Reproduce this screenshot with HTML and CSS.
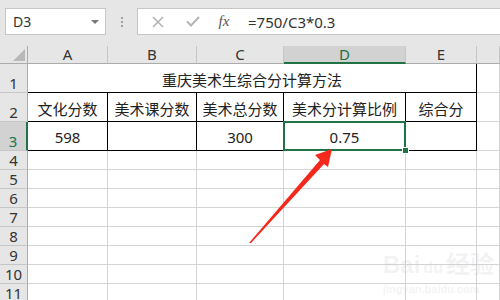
FILE: index.html
```html
<!DOCTYPE html>
<html lang="zh-CN">
<head>
    <meta charset="UTF-8">
    <title>重庆美术生综合分计算方法</title>
    <link rel="stylesheet" href="styles.css">
</head>
<body>
    <!-- 编辑栏 -->
    <div class="toolbar">
        <div class="namebox">
            <span>D3</span>
            <span class="caret"></span>
        </div>
        <div class="grip"><i></i><i></i><i></i></div>
        <div class="formula">
            <span class="fbtn">
                <svg width="12" height="12" viewBox="0 0 12 12"><path d="M1 1L11 11M11 1L1 11" stroke="#b4b4b4" stroke-width="1.6" fill="none"/></svg>
            </span>
            <span class="fbtn">
                <svg width="14" height="11" viewBox="0 0 14 11"><path d="M1 5.5L5 9.5L13 1" stroke="#b4b4b4" stroke-width="2" fill="none"/></svg>
            </span>
            <span class="fx">fx</span>
            <span class="ftext">=750/C3*0.3</span>
        </div>
    </div>

    <!-- 表格 -->
    <div class="sheet">
        <div class="corner"></div>
        <div class="colhead">A</div>
        <div class="colhead">B</div>
        <div class="colhead">C</div>
        <div class="colhead active">D</div>
        <div class="colhead">E</div>
        <div class="colhead"></div>

        <div class="rowhead">1</div>
        <div class="cell title">重庆美术生综合分计算方法</div>
        <div class="cell"></div>

        <div class="rowhead">2</div>
        <div class="cell boxed">文化分数</div>
        <div class="cell boxed">美术课分数</div>
        <div class="cell boxed">美术总分数</div>
        <div class="cell boxed">美术分计算比例</div>
        <div class="cell boxed">综合分</div>
        <div class="cell"></div>

        <div class="rowhead active">3</div>
        <div class="cell boxed">598</div>
        <div class="cell boxed"></div>
        <div class="cell boxed">300</div>
        <div class="cell boxed selected">0.75</div>
        <div class="cell boxed"></div>
        <div class="cell"></div>
    </div>

    <div class="watermark">
        <div class="wm-logo">Bai<span class="paw">du</span>经验</div>
        <div class="wm-url">jingyan.baidu.com</div>
    </div>

    <svg class="arrow" width="500" height="300" viewBox="0 0 500 300">
        <polygon points="332,149 315,155 320,160 249,243 251,243 324,164 328,167" fill="#f5281c"/>
    </svg>

    <script>
        // 空行 4-11
        const sheet = document.querySelector('.sheet');
        for (let r = 4; r <= 11; r++) {
            let html = '<div class="rowhead">' + r + '</div>';
            for (let c = 0; c < 6; c++) {
                html += '<div class="cell"></div>';
            }
            sheet.insertAdjacentHTML('beforeend', html);
        }
    </script>
</body>
</html>
```

FILE: styles.css
```css
body {
    margin: 0;
    width: 500px;
    height: 300px;
    overflow: hidden;
    position: relative;
    background-color: #fff;
    font-family: "Noto Sans", "Noto Sans CJK SC", sans-serif;
    color: #222;
}

/* 编辑栏 */
.toolbar {
    height: 46px;
    background-color: #e6e6e6;
    display: flex;
    align-items: flex-start;
    padding-top: 8px;
    box-sizing: border-box;
}

.namebox {
    margin-left: 5px;
    width: 101px;
    height: 27px;
    box-sizing: border-box;
    background-color: #fff;
    border: 1px solid #c6c6c6;
    display: flex;
    align-items: center;
    justify-content: space-between;
    padding: 0 6px 0 7px;
    font-size: 14px;
    color: #333;
}

.caret {
    width: 0;
    height: 0;
    border-left: 4px solid transparent;
    border-right: 4px solid transparent;
    border-top: 4px solid #777;
}

.grip {
    width: 31px;
    height: 27px;
    display: flex;
    flex-direction: column;
    align-items: center;
    justify-content: center;
    gap: 2px;
}

.grip i {
    width: 2px;
    height: 2px;
    background-color: #a0a0a0;
}

.formula {
    flex: 1;
    height: 27px;
    box-sizing: border-box;
    background-color: #fff;
    border: 1px solid #c6c6c6;
    border-right: none;
    display: flex;
    align-items: center;
}

.fbtn {
    width: 35px;
    display: flex;
    justify-content: center;
}

.fbtn:first-child {
    margin-left: 2px;
}

.fx {
    width: 24px;
    text-align: center;
    font-family: "Liberation Serif", serif;
    font-style: italic;
    font-size: 15px;
    color: #555;
    margin-left: 2px;
}

.ftext {
    margin-left: 12px;
    font-size: 15px;
    color: #333;
}

/* 表格 */
.sheet {
    display: grid;
    grid-template-columns: 28px 80px 89px 87px 122px 71px 1fr;
    grid-template-rows: 18px 29px 29px 29px repeat(8, 19px);
}

.sheet > div {
    box-sizing: border-box;
}

.corner {
    background-color: #e6e6e6;
    border-right: 1px solid #ababab;
    border-bottom: 1px solid #ababab;
    position: relative;
}

.corner::after {
    content: "";
    position: absolute;
    right: 2px;
    bottom: 2px;
    border-left: 12px solid transparent;
    border-bottom: 12px solid #b8b8b8;
}

.colhead {
    background-color: #e6e6e6;
    border-right: 1px solid #c6c6c6;
    border-bottom: 1px solid #ababab;
    font-size: 15px;
    line-height: 17px;
    text-align: center;
    color: #333;
}

.colhead.active {
    background-color: #d2d2d2;
    border-bottom: 2px solid #217346;
    color: #217346;
}

.rowhead {
    background-color: #e6e6e6;
    border-right: 1px solid #ababab;
    border-bottom: 1px solid #c6c6c6;
    font-size: 15px;
    display: flex;
    align-items: flex-end;
    justify-content: center;
    line-height: 18px;
    color: #333;
}

.rowhead.active {
    background-color: #d2d2d2;
    border-right: 2px solid #217346;
    color: #217346;
}

.cell {
    border-right: 1px solid #d4d4d4;
    border-bottom: 1px solid #d4d4d4;
    font-size: 15px;
    display: flex;
    align-items: center;
    justify-content: center;
    padding-top: 2px;
    white-space: nowrap;
}

.cell.title {
    grid-column: span 5;
    border-right-color: #000;
    border-bottom-color: #000;
}

.cell.boxed {
    border-right-color: #000;
    border-bottom-color: #000;
}

.cell.selected {
    position: relative;
}

.cell.selected::before {
    content: "";
    position: absolute;
    top: -1px;
    left: -1px;
    right: -1px;
    bottom: -1px;
    border: 2px solid #217346;
}

.cell.selected::after {
    content: "";
    position: absolute;
    right: -4px;
    bottom: -4px;
    width: 5px;
    height: 5px;
    background-color: #217346;
    border: 1px solid #fff;
}

/* 水印 */
.watermark {
    position: absolute;
    left: 383px;
    top: 250px;
    color: rgba(200, 200, 200, 0.22);
    font-family: "Liberation Sans", "Noto Sans CJK SC", sans-serif;
}

.wm-logo {
    font-size: 24px;
    font-weight: bold;
    line-height: 30px;
}

.paw {
    font-size: 16px;
    margin: 0 3px;
}

.wm-url {
    font-size: 11px;
    font-weight: bold;
    line-height: 12px;
}

.arrow {
    position: absolute;
    left: 0;
    top: 0;
}
```
